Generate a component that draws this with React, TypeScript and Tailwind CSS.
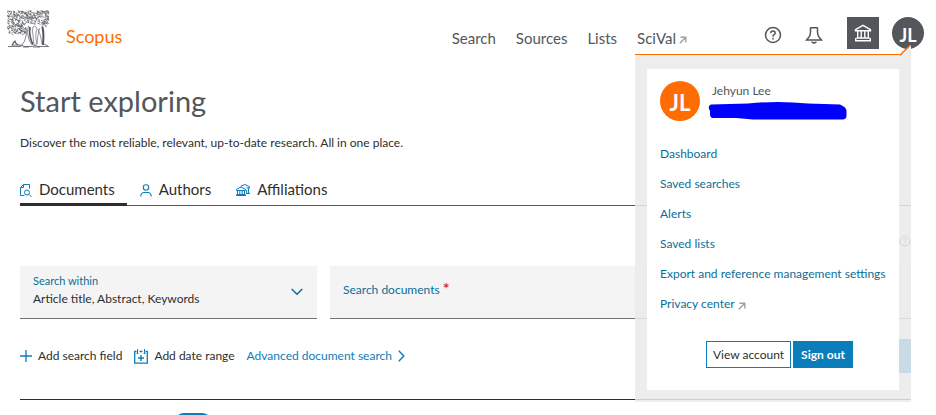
import React from "react";

/* Small deterministic generator so the engraving is the same on each render. */
function makeRandom(seed: number) {
  let s = seed;
  return () => {
    s = (s * 16807) % 2147483647;
    return s / 2147483647;
  };
}

function buildFoliage(): string[] {
  const rnd = makeRandom(77);
  const out: string[] = [];
  const add = (x0: number, y0: number, w: number, h: number, n: number) => {
    for (let i = 0; i < n; i++) {
      const x = x0 + rnd() * w;
      const y = y0 + rnd() * h;
      const a = rnd() * 3 - 1.5;
      const b = rnd() * 3 - 1.5;
      out.push(`M${x.toFixed(1)} ${y.toFixed(1)}q${a.toFixed(1)} -1.2 ${(a + b).toFixed(1)} ${b.toFixed(1)}`);
    }
  };
  add(1, 1, 41, 13, 330);
  add(1, 14, 17, 10, 110);
  add(36, 12, 5, 4, 14);
  return out;
}

const foliage = buildFoliage();

function TreeLogo() {
  return (
    <svg viewBox="0 0 43 38" className="h-[38px] w-[43px]" fill="none" stroke="#53565a" role="img" aria-label="Elsevier">
      <path d={foliage.join("")} strokeWidth="0.600" />
      <path d="M18.500 17q1.500 4 .500 9q-1 6-4 9l-3 1.500M21.500 16q-1.500 5-.500 10q1 5 4 9M15 25q3-1 4-4" strokeWidth="0.700" />
      <path d="M26 17q2-2 3 0q2 3 0 5q-1 6 1 12q-2 2-3 0q-1-6-1-9q-1-4 0-8M31 19q3 6 4 15M32.500 18q-2 8-2.500 16" strokeWidth="0.600" />
      <path d="M35.300 16.500q2 8 .500 18.500" strokeWidth="2" />
      <path d="M23 17q-1.500 9 3 17.500" strokeWidth="1.700" />
      <path d="M1 36.500h12l2-1 3 1h7l3-1 3 1h11M5 35h9M16 37h6M26 37h7M37 34l4 2" strokeWidth="0.800" />
      <path d="M5 35.500q1-3 3-4.500l1 2.500 2 1.500" strokeWidth="1.100" />
    </svg>
  );
}

function HelpIcon({ className }: { className: string }) {
  return (
    <svg viewBox="0 0 18 18" className={className} fill="none" stroke="currentColor" strokeWidth="1.500" aria-hidden="true">
      <circle cx="9" cy="9" r="7.500" />
      <path d="M6.800 7.300V7q0-2 2.200-2t2.200 1.900q0 1-1.100 1.700-1.100.7-1.100 1.800v.4" />
      <path d="M9 11.800v1.600" />
    </svg>
  );
}

function BellIcon() {
  return (
    <svg viewBox="0 0 18 18" className="h-[18px] w-[18px]" fill="none" stroke="currentColor" strokeWidth="1.500" aria-hidden="true">
      <path d="M5.200 1.800h7.600M5.500 1.800V6q0 3-1.500 5l-2.500 3h15L14 11q-1.500-2-1.500-5V1.800M6.500 15.800 9 17.200l2.500-1.400" />
    </svg>
  );
}

function InstitutionIcon() {
  return (
    <svg viewBox="0 0 18 18" className="h-[18px] w-[18px]" fill="none" stroke="currentColor" strokeWidth="1.400" aria-hidden="true">
      <path d="M1.500 5.600 9 1.300l7.500 4.300v1.200h-15zM3.700 7v7M7.200 7v7M10.800 7v7M14.300 7v7M2.500 14h13M1 16.700h16M1.700 14v2.700M16.300 14v2.700" />
    </svg>
  );
}

function ArrowOut() {
  return (
    <svg viewBox="0 0 8 8" className="mt-1 h-2 w-2 text-[#a0a0a0]" fill="none" stroke="currentColor" strokeWidth="1.400" aria-hidden="true">
      <path d="M1.500 1.200h5.300v5.300M6.600 1.400.8 7.200" />
    </svg>
  );
}

function DocumentIcon() {
  return (
    <svg viewBox="0 0 12 13" className="h-[13px] w-3" fill="none" stroke="currentColor" aria-hidden="true">
      <path d="M4.500 11.500h-4V3.500l3-3h6v4M3.500.5v3h-3" />
      <circle cx="7" cy="8.500" r="2.500" />
      <path d="m8.800 10.300 2.500 2.500" />
    </svg>
  );
}

function PersonIcon() {
  return (
    <svg viewBox="0 0 12 13" className="h-[13px] w-3" fill="none" stroke="currentColor" strokeWidth="1.100" aria-hidden="true">
      <circle cx="6" cy="3.500" r="2.700" />
      <path d="M.8 12.500q0-4 3.400-4h3.600q3.400 0 3.400 4" />
    </svg>
  );
}

function AffiliationIcon() {
  return (
    <svg viewBox="0 0 14 13" className="h-[13px] w-3.5" fill="none" stroke="currentColor" aria-hidden="true">
      <path d="M.5 6.500V5.300L5 3l4.500 2.300v1.200zM1.500 6.500v4M3.800 6.500v4M6.200 6.500v4M8.500 6.500v4M0 11.500h10M.5 10.500h9" />
      <path d="m4.500 2.300 4.300-1.800 4.700 2.300v1.200h-3M12.500 4v5.500M10.700 6v3.500M10 9.500h4" />
    </svg>
  );
}

function CalendarPlus() {
  return (
    <svg viewBox="0 0 14 15" className="h-[15px] w-3.5 text-[#0c7dbb]" fill="none" stroke="currentColor" aria-hidden="true">
      <path d="M2.500 2.500H.7v11.700h12.600V2.500h-1.800M5.500 2.500h3" strokeWidth="1.300" />
      <path d="M2.500 4.500h2M9.500 4.500h2M3.500 0v4.500M10.500 0v4.500" />
      <path d="M7 6v6M4 9h6" strokeWidth="1.400" />
    </svg>
  );
}

const navLinks = ["Search", "Sources", "Lists"];

const tabs = [
  { label: "Documents", icon: <DocumentIcon />, active: true },
  { label: "Authors", icon: <PersonIcon />, active: false },
  { label: "Affiliations", icon: <AffiliationIcon />, active: false },
];

const menuLinks = ["Dashboard", "Saved searches", "Alerts", "Saved lists", "Export and reference management settings"];

function AccountMenu() {
  return (
    <div className="absolute top-[54px] right-[25px] w-[276px] border-t border-[#ff6c00] bg-[#eaeaea]/85 px-3 pt-3.5 pb-3">
      <svg viewBox="0 0 12 11" className="absolute -top-2.5 right-0 h-[11px] w-3" aria-hidden="true">
        <path d="M1 11 12 0v11z" fill="#ededed" />
        <path d="M1 10.300 11 .3" stroke="#ff6c00" strokeWidth="1.500" fill="none" />
      </svg>
      <section aria-label="Account" className="bg-white pt-3 pr-3 pb-[22px] pl-[13px]">
        <div className="flex gap-3">
          <span className="flex h-10 w-10 shrink-0 items-center justify-center rounded-full bg-[#ff6c00] pt-1 text-[22px] font-bold text-white">
            JL
          </span>
          <div>
            <p className="leading-5 text-[#53565a]">Jehyun Lee</p>
            <svg viewBox="0 0 140 20" className="-ml-1 h-5 w-[140px]" aria-hidden="true">
              <path
                d="M3 3.500 40 2.500q30-3 60 0l32 1q7 3 6.500 7v4q0 4-4 4H45l-17-1.500H5q-3 0-3-4V10Q-1 5 3 3.500Z"
                fill="#0000ff"
              />
            </svg>
          </div>
        </div>
        <ul className="mt-[23px] flex flex-col gap-2.5 leading-5 whitespace-nowrap text-[#0a6f98]">
          {menuLinks.map((t) => (
            <li key={t}>
              <a href="#menu">{t}</a>
            </li>
          ))}
          <li>
            <a href="#privacy" className="flex items-center gap-[3px]">
              Privacy center <ArrowOut />
            </a>
          </li>
        </ul>
        <div className="mt-[27px] flex justify-end gap-0.5 pr-[34px]">
          <button className="h-[27px] w-[85px] border border-[#0c7dbb] text-[#2e2e2e]">View account</button>
          <button className="h-[27px] w-[60px] bg-[#0c7dbb] font-bold text-white">Sign out</button>
        </div>
      </section>
    </div>
  );
}

export default function App() {
  return (
    <div className="relative h-screen overflow-hidden bg-white font-['Lato','Noto_Sans',sans-serif] text-xs text-[#2e2e2e]">
      <header className="flex h-14 items-start justify-between pt-2.5 pr-3 pl-[7px]">
        <a href="#home" className="flex gap-4">
          <TreeLogo />
          <span className="pt-3.5 text-lg leading-6 text-[#ff6c00]">Scopus</span>
        </a>
        <div className="flex items-center pt-1.5 text-[#53565a]">
          <nav className="flex gap-5 pt-2.5 text-[15px] leading-6">
            {navLinks.map((t) => (
              <a key={t} href="#nav">
                {t}
              </a>
            ))}
            <a href="#scival" className="flex items-center gap-[3px]">
              SciVal <ArrowOut />
            </a>
          </nav>
          <button aria-label="Help" className="ml-[77px] pt-1">
            <HelpIcon className="h-[18px] w-[18px]" />
          </button>
          <button aria-label="Notifications" className="ml-[23px] pt-1">
            <BellIcon />
          </button>
          <button aria-label="Institution" className="ml-6 flex h-8 w-8 items-center justify-center bg-[#53565a] text-white">
            <InstitutionIcon />
          </button>
          <button
            aria-label="Account menu"
            className="ml-[13px] flex h-8 w-8 items-center justify-center rounded-full bg-[#53565a] pt-1 text-lg font-bold text-white"
          >
            JL
          </button>
        </div>
      </header>

      <main className="pt-[27px] pr-[25px] pl-5">
        <h1 className="text-[29px] leading-9 text-[#53565a]">Start exploring</h1>
        <p className="mt-3.5 leading-5">Discover the most reliable, relevant, up-to-date research. All in one place.</p>

        <div role="tablist" className="mt-5 flex h-[33px] gap-[13px] border-b border-[#53565a] text-[15px]">
          {tabs.map((t) => (
            <button
              key={t.label}
              role="tab"
              aria-selected={t.active}
              className={
                t.active
                  ? "flex h-[33px] items-center gap-[7px] border-b-[3px] border-[#2e2e2e] pt-1 pr-3"
                  : "flex h-[33px] items-center gap-[7px] border-b-[3px] border-transparent pt-1 pr-3"
              }
            >
              <span className="text-[#0c7dbb]">{t.icon}</span>
              {t.label}
            </button>
          ))}
        </div>

        <div className="mt-[29px] flex justify-end text-[#0c7dbb]">
          <button aria-label="Search help">
            <HelpIcon className="h-3 w-3" />
          </button>
        </div>

        <form className="mt-[19px]" onSubmit={(e) => e.preventDefault()}>
          <div className="flex gap-[13px]">
            <div className="relative h-[53px] w-1/3 border-b border-[#737373] bg-[#f4f4f4] px-[13px] pt-1.5">
              <label htmlFor="within" className="block text-[11px] leading-[18px] text-[#0a6f98]">
                Search within
              </label>
              <select id="within" className="block h-[18px] w-full appearance-none bg-transparent leading-[18px]">
                <option>Article title, Abstract, Keywords</option>
              </select>
              <svg viewBox="0 0 12 8" className="pointer-events-none absolute top-[22px] right-3.5 h-2 w-3" fill="none" stroke="#0a6f98" strokeWidth="1.500" aria-hidden="true">
                <path d="m.7 1 5.300 5.300L11.300 1" />
              </svg>
            </div>
            <div className="relative h-[53px] flex-1 border-b border-[#737373] bg-[#f4f4f4]">
              <label htmlFor="documents" className="absolute top-3 left-[13px] leading-5 text-[#0a6f98]">
                Search documents <span className="text-base leading-5 font-bold text-[#d1331f]">*</span>
              </label>
              <input id="documents" required className="h-full w-full bg-transparent px-3" />
            </div>
          </div>

          <div className="mt-5 flex h-[34px] items-center">
            <button type="button" className="flex items-center gap-1.5">
              <svg viewBox="0 0 12 12" className="h-3 w-3" fill="none" stroke="#0c7dbb" strokeWidth="1.300" aria-hidden="true">
                <path d="M6 0v12M0 6h12" />
              </svg>
              Add search field
            </button>
            <button type="button" className="ml-3 flex items-center gap-1.5">
              <CalendarPlus />
              Add date range
            </button>
            <a href="#advanced" className="ml-3 flex items-center gap-1.5 text-[#0c7dbb]">
              Advanced document search
              <svg viewBox="0 0 7 12" className="h-3 w-[7px]" fill="none" stroke="currentColor" strokeWidth="1.400" aria-hidden="true">
                <path d="m.8.8 5 5.200-5 5.200" />
              </svg>
            </a>
            <button type="submit" className="ml-auto h-[34px] w-[90px] bg-[#0c7dbb] text-white">
              Search
            </button>
          </div>
        </form>

        <div className="mt-[26px] border-t border-[#2e2e2e] pt-[13px] pl-[154px]">
          <div className="h-5 w-[38px] rounded-[10px] bg-[#0c7dbb]" />
        </div>
      </main>

      <AccountMenu />
    </div>
  );
}
